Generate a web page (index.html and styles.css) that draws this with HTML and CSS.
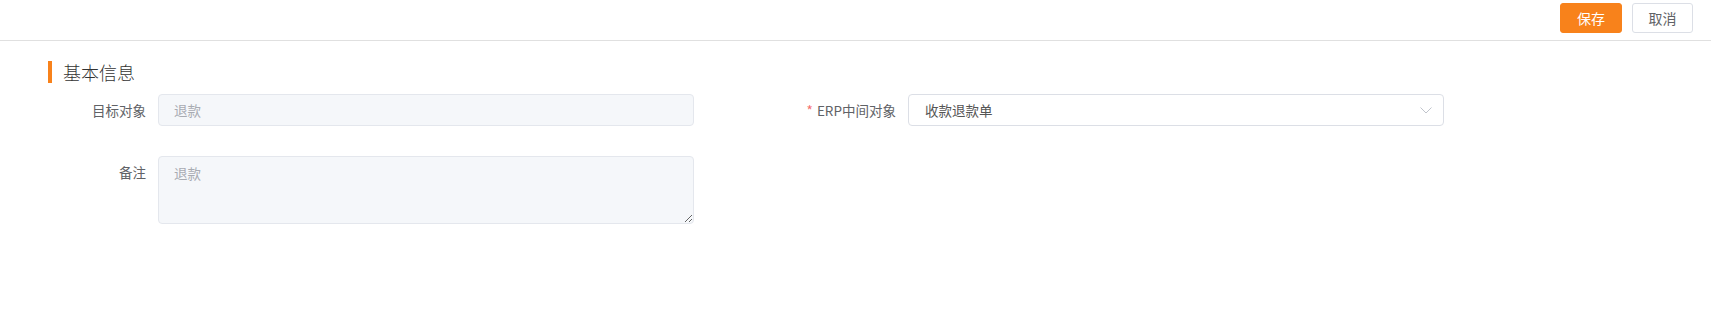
FILE: index.html
```html
<!DOCTYPE html>
<html lang="zh-CN">
<head>
  <meta charset="UTF-8">
  <meta name="viewport" content="width=device-width, initial-scale=1.0">
  <title>基本信息</title>
  <link rel="stylesheet" href="styles.css">
</head>
<body>
  <div class="toolbar">
    <button class="btn btn-save" type="button">保存</button>
    <button class="btn btn-cancel" type="button">取消</button>
  </div>
  <div class="page">
    <h2 class="section-title">基本信息</h2>
    <form class="form">
      <div class="form-row">
        <div class="form-item">
          <label class="form-label" for="target">目标对象</label>
          <input class="form-input" id="target" type="text" placeholder="退款" readonly>
        </div>
        <div class="form-item">
          <label class="form-label required" for="erp">ERP中间对象</label>
          <div class="form-select" id="erp">
            <span class="select-value">收款退款单</span>
            <svg class="select-arrow" width="12" height="7" viewBox="0 0 12 7">
              <path d="M0.5 0.5 L6 6 L11.5 0.5" fill="none" stroke="#c0c4cc" stroke-width="1"/>
            </svg>
          </div>
        </div>
      </div>
      <div class="form-row">
        <div class="form-item">
          <label class="form-label" for="remark">备注</label>
          <textarea class="form-textarea" id="remark" placeholder="退款" readonly></textarea>
        </div>
      </div>
    </form>
  </div>
</body>
</html>
```

FILE: styles.css
```css
/* Geral */
* {
  margin: 0;
  padding: 0;
  box-sizing: border-box;
}
body {
  font-family: "Microsoft YaHei", "Noto Sans CJK SC", sans-serif;
  font-size: 14px;
  color: #606266;
  background: #fff;
}

/* Barra de botões */
.toolbar {
  height: 41px;
  border-bottom: 1px solid #e0e0e0;
  display: flex;
  justify-content: flex-end;
  align-items: flex-start;
  gap: 10px;
  padding: 3px 18px 0 0;
}
.btn {
  height: 30px;
  padding: 0;
  font-family: inherit;
  font-size: 14px;
  text-align: center;
  white-space: nowrap;
  border-radius: 3px;
  cursor: pointer;
  line-height: 28px;
}
.btn-save {
  width: 62px;
  background: #f8821b;
  border: 1px solid #f8821b;
  color: #fff;
}
.btn-cancel {
  width: 61px;
  background: #fff;
  border: 1px solid #dcdfe6;
  color: #606266;
}

/* Conteúdo */
.page {
  padding: 20px 0 0 48px;
}
.section-title {
  font-size: 18px;
  font-weight: 300;
  color: #333;
  line-height: 22px;
  height: 22px;
  border-left: 4px solid #f8821b;
  padding-left: 11px;
}
.form {
  margin-top: 11px;
  margin-left: -10px;
}
.form-row {
  display: flex;
  margin-bottom: 30px;
}
.form-item {
  width: 750px;
  display: flex;
  align-items: flex-start;
}
.form-label {
  width: 120px;
  padding-right: 12px;
  text-align: right;
  line-height: 32px;
  font-size: 13.5px;
  color: #606266;
}
.form-label.required::before {
  content: "*";
  color: #f56c6c;
  margin-right: 4px;
}
.form-input,
.form-select,
.form-textarea {
  width: 536px;
  border-radius: 4px;
  font-family: inherit;
  font-size: 13.5px;
  outline: none;
}
.form-input {
  height: 32px;
  padding: 0 15px;
  background: #f5f7fa;
  border: 1px solid #e4e7ed;
  color: #333;
}
.form-input::placeholder,
.form-textarea::placeholder {
  color: #a8abb2;
}
.form-select {
  height: 32px;
  padding: 0 11px 0 16px;
  border: 1px solid #dcdfe6;
  background: #fff;
  display: flex;
  align-items: center;
  justify-content: space-between;
}
.select-value {
  color: #555;
}
.form-textarea {
  height: 68px;
  padding: 6px 15px;
  background: #f5f7fa;
  border: 1px solid #e4e7ed;
  color: #333;
  line-height: 20px;
  resize: both;
}
```
